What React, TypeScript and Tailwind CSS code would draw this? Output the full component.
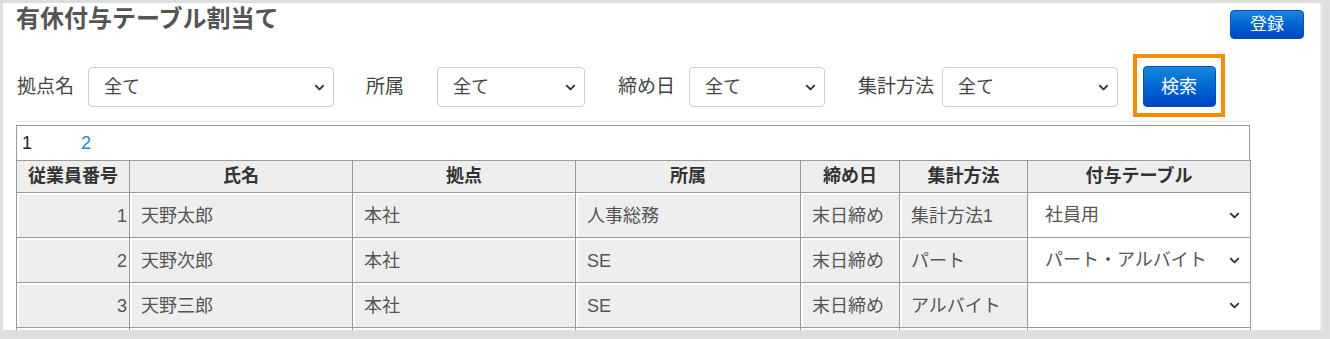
import { ChevronDown } from 'lucide-react';

const FONT = { fontFamily: '"Liberation Sans", "Noto Sans CJK JP", sans-serif' };

interface Row {
  no: string;
  name: string;
  base: string;
  dept: string;
  close: string;
  method: string;
  table: string;
}

const ROWS: Row[] = [
  { no: '1', name: '天野太郎', base: '本社', dept: '人事総務', close: '末日締め', method: '集計方法1', table: '社員用' },
  { no: '2', name: '天野次郎', base: '本社', dept: 'SE', close: '末日締め', method: 'パート', table: 'パート・アルバイト' },
  { no: '3', name: '天野三郎', base: '本社', dept: 'SE', close: '末日締め', method: 'アルバイト', table: '' },
  { no: '', name: '', base: '', dept: '', close: '', method: '', table: '' },
];

const COLS = [
  { label: '従業員番号', w: 'w-[113px]' },
  { label: '氏名', w: 'w-[223px]' },
  { label: '拠点', w: 'w-[223px]' },
  { label: '所属', w: 'w-[225px]' },
  { label: '締め日', w: 'w-[99px]' },
  { label: '集計方法', w: 'w-[128px]' },
  { label: '付与テーブル', w: 'w-[223px]' },
];

function Chevron() {
  return <ChevronDown size={15} strokeWidth={3} className="text-[#333] shrink-0" />;
}

function FilterSelect({ width }: { width: string }) {
  return (
    <div
      className={`${width} h-[40px] flex items-center justify-between rounded-[4px] border border-[#cfcfcf] bg-white pl-[15px] pr-[6px] text-[18px] text-[#444]`}
    >
      <span>全て</span>
      <Chevron />
    </div>
  );
}

function FilterLabel({ text }: { text: string }) {
  return <span className="min-w-[72px] pr-[8px] pl-[1px] text-[19px] text-[#444] whitespace-nowrap">{text}</span>;
}

function GrayCell({ children, right }: { children?: React.ReactNode; right?: boolean }) {
  return (
    <td className="border border-[#9a9a9a] p-0 h-[45px]">
      <div
        className={`h-full bg-[#eeeeee] border-t-2 border-l-2 border-white flex items-center text-[18px] text-[#555] whitespace-nowrap ${
          right ? 'justify-end pr-[2px]' : 'pl-[9px]'
        }`}
      >
        {children}
      </div>
    </td>
  );
}

export default function App() {
  return (
    <div style={FONT} className="w-[1330px] h-[339px] bg-[#dedede] pt-[3px] pl-[3px] pr-[8px] pb-[9px] overflow-hidden">
      <div className="h-full bg-white border-r-2 border-[#ececec] overflow-hidden pl-[13px] pr-[16px]">
        {/* Title */}
        <div className="h-[51px] flex justify-between items-start">
          <h1 className="pt-[1px] text-[24px] leading-[30px] font-bold text-[#555]">有休付与テーブル割当て</h1>
          <button className="mt-[7px] w-[74px] h-[29px] rounded-[4px] border border-[#0a4fb8] bg-gradient-to-b from-[#1a86dc] to-[#0043c6] text-white text-[17px] leading-none">
            登録
          </button>
        </div>

        {/* Filters */}
        <div className="h-[63px] flex items-center">
          <div className="flex items-center pt-[3px]">
            <FilterLabel text="拠点名" />
            <FilterSelect width="w-[246px]" />
          </div>
          <div className="flex items-center pt-[3px] ml-[31px]">
            <FilterLabel text="所属" />
            <FilterSelect width="w-[148px]" />
          </div>
          <div className="flex items-center pt-[3px] ml-[32px]">
            <FilterLabel text="締め日" />
            <FilterSelect width="w-[136px]" />
          </div>
          <div className="flex items-center pt-[3px] ml-[32px]">
            <FilterLabel text="集計方法" />
            <FilterSelect width="w-[176px]" />
          </div>
          <div className="ml-[15px] w-[92px] h-[63px] border-[4px] border-[#f28c00] flex items-center justify-center pt-[2px]">
            <button className="w-[73px] h-[41px] rounded-[4px] border border-[#0a4fb8] bg-gradient-to-b from-[#1a86dc] to-[#0043c6] text-white text-[18px] leading-none">
              検索
            </button>
          </div>
        </div>

        <div className="mt-[4px] w-[1234px] border-t border-[#e2e2e2]" />

        {/* Table */}
        <div className="mt-[3px] w-[1234px] border border-[#9a9a9a] border-b-0">
          <div className="h-[34px] flex items-center gap-[49px] pl-[5px] text-[18px]">
            <span className="text-[#222]">1</span>
            <span className="text-[#1c88d4]">2</span>
          </div>
          <table className="w-[1234px] -ml-px border-collapse table-fixed">
            <colgroup>
              {COLS.map((c) => (
                <col key={c.label} className={c.w} />
              ))}
            </colgroup>
            <thead>
              <tr>
                {COLS.map((c) => (
                  <th
                    key={c.label}
                    className="h-[32px] border border-[#9a9a9a] bg-[#eeeeee] text-center text-[18px] font-bold text-[#333] whitespace-nowrap"
                  >
                    {c.label}
                  </th>
                ))}
              </tr>
            </thead>
            <tbody>
              {ROWS.map((r, i) => (
                <tr key={i}>
                  <GrayCell right>{r.no}</GrayCell>
                  <GrayCell>{r.name}</GrayCell>
                  <GrayCell>{r.base}</GrayCell>
                  <GrayCell>{r.dept}</GrayCell>
                  <GrayCell>{r.close}</GrayCell>
                  <GrayCell>{r.method}</GrayCell>
                  <td className="border border-[#9a9a9a] p-0 h-[45px] bg-white">
                    <div className="h-full flex items-center justify-between pl-[17px] pr-[8px] text-[18px] text-[#555] whitespace-nowrap">
                      <span>{r.table}</span>
                      {i < 3 && <Chevron />}
                    </div>
                  </td>
                </tr>
              ))}
            </tbody>
          </table>
        </div>
      </div>
    </div>
  );
}
